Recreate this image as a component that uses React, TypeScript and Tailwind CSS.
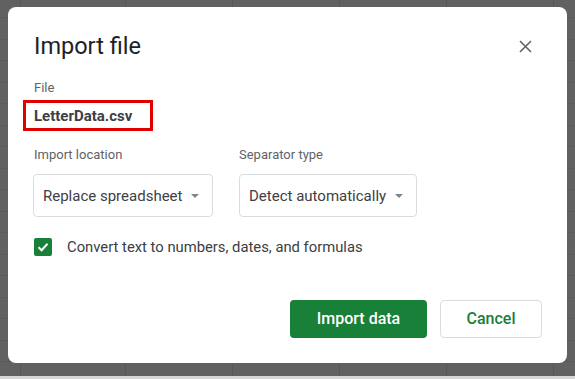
import React from "react";

function Backdrop() {
  const vx = [20, 125, 232, 339, 446, 553];
  const hy: number[] = [];
  for (let y = 17; y < 376; y += 21.5) hy.push(Math.round(y));
  return (
    <svg className="absolute inset-0" width="575" height="379" viewBox="0 0 575 379">
      <rect x="0" y="0" width="575" height="379" fill="#616161" />
      {hy.map((y) => (
        <line key={"h" + y} x1="0" x2="575" y1={y + 0.5} y2={y + 0.5} stroke="#5a5a5a" strokeWidth="1" />
      ))}
      {vx.map((x) => (
        <line key={"v" + x} x1={x + 0.5} x2={x + 0.5} y1="0" y2="379" stroke="#575757" strokeWidth="1" />
      ))}
      <rect x="0" y="376" width="575" height="3" fill="#d6d6d6" />
    </svg>
  );
}

function Caret() {
  return (
    <svg width="8" height="4" viewBox="0 0 8 4" className="shrink-0">
      <polygon points="0,0 8,0 4,4" fill="#80868b" />
    </svg>
  );
}

function Select({ value, width }: { value: string; width: string }) {
  return (
    <div className={`flex items-center gap-[9px] h-[43px] border border-[#dadce0] rounded-[4px] pl-[9px] ${width}`}>
      <span className="text-[15px] leading-[20px] text-[#3c4043] whitespace-nowrap">{value}</span>
      <Caret />
    </div>
  );
}

export default function App() {
  return (
    <div className="relative w-[575px] h-[379px] overflow-hidden font-['Roboto',sans-serif]">
      <Backdrop />
      <div className="relative pt-[7px] pl-[8px]">
        <div className="w-[559px] h-[356px] bg-white rounded-[8px] flex flex-col pl-[26px] pr-[25px] pt-[25px] pb-[25px]">
          <div className="flex items-start justify-between">
            <h1 className="text-[23.5px] leading-[28px] text-[#202124]">Import file</h1>
            <button className="mt-[8px] mr-[10px]" aria-label="Close">
              <svg width="13" height="13" viewBox="0 0 13 13">
                <path d="M1 1 L12 12 M12 1 L1 12" stroke="#5f6368" strokeWidth="1.6" fill="none" />
              </svg>
            </button>
          </div>

          <div className="mt-[20px] text-[13px] leading-[16px] text-[#5f6368]">File</div>
          <div className="mt-[4px] -ml-[11px] w-[130px] h-[31px] border-[3px] border-[#e00000] pl-[8px] pt-[1px] flex items-center">
            <span className="text-[15px] leading-[20px] font-bold text-[#3c4043]">LetterData.csv</span>
          </div>

          <div className="mt-[16px] flex gap-[26px] -ml-[1px]">
            <div className="flex flex-col w-[180px]">
              <div className="pl-[1px] text-[13px] leading-[16px] text-[#5f6368]">Import location</div>
              <div className="mt-[11px]">
                <Select value="Replace spreadsheet" width="w-[180px]" />
              </div>
            </div>
            <div className="flex flex-col w-[178px]">
              <div className="text-[13px] leading-[16px] text-[#5f6368]">Separator type</div>
              <div className="mt-[11px]">
                <Select value="Detect automatically" width="w-[178px]" />
              </div>
            </div>
          </div>

          <div className="mt-[20px] flex items-center">
            <div className="w-[18px] h-[18px] rounded-[2px] bg-[#188038] flex items-center justify-center">
              <svg width="14" height="14" viewBox="0 0 14 14">
                <path d="M2.5 7.2 L5.6 10.2 L11.5 3.8" stroke="#ffffff" strokeWidth="2" fill="none" />
              </svg>
            </div>
            <span className="ml-[15px] text-[14.8px] leading-[20px] text-[#3c4043]">
              Convert text to numbers, dates, and formulas
            </span>
          </div>

          <div className="mt-auto flex justify-end gap-[13px]">
            <button className="w-[137px] h-[38px] rounded-[4px] bg-[#188038] text-white text-[16px] font-medium">
              Import data
            </button>
            <button className="w-[102px] h-[38px] rounded-[4px] border border-[#dadce0] bg-white text-[#188038] text-[16px] font-medium">
              Cancel
            </button>
          </div>
        </div>
      </div>
    </div>
  );
}
